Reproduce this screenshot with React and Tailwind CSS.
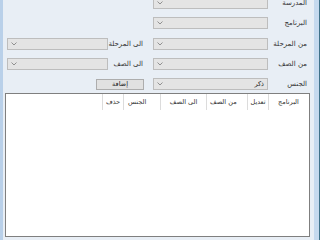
import React from "react";

const font = { fontFamily: '"DejaVu Sans", "Noto Sans", sans-serif' };

function Chevron() {
  return (
    <svg width="6" height="4" viewBox="0 0 6 4" className="shrink-0">
      <path d="M0.5 0.5 L3 3 L5.5 0.5" fill="none" stroke="#7a7a7a" strokeWidth="0.8" />
    </svg>
  );
}

function Combo({ w, value }) {
  return (
    <div
      className={`${w} h-[12px] bg-[#e4e4e4] border border-[#bdbdbd] flex items-center justify-between pl-[3px] pr-[3px] shrink-0`}
      dir="rtl"
    >
      <span className="text-[6.5px] leading-none text-[#222]">{value || ""}</span>
      <Chevron />
    </div>
  );
}

function Label({ w, children }) {
  return (
    <div className={`${w} text-right text-[7px] leading-none text-[#333] shrink-0 pt-[1px]`}>{children}</div>
  );
}

export default function App() {
  const cols = [
    { t: "البرنامج", w: "w-[40px]", cls: "justify-center" },
    { t: "تعديل", w: "w-[21px]", cls: "justify-center" },
    { t: "من الصف", w: "w-[41px]", cls: "justify-end pl-[3px]" },
    { t: "الى الصف", w: "w-[46px]", cls: "justify-center" },
    { t: "الجنس", w: "w-[37px]", cls: "justify-end pl-[4px]" },
    { t: "حذف", w: "w-[21px]", cls: "justify-center" },
  ];
  return (
    <div className="w-[320px] h-[240px] overflow-hidden bg-[#e8eef5] flex" style={font}>
      <div className="w-[3px] h-full bg-[#b9d0e9] shrink-0" />
      <div className="flex-1 flex flex-col" dir="rtl">
        <div className="flex flex-col pr-[7px] mt-[-3px]">
          <div className="flex items-center h-[12px]">
            <Label w="w-[39px]">المدرسة</Label>
            <Combo w="w-[115px]" />
          </div>
          <div className="flex items-center h-[12px] mt-[8px]">
            <Label w="w-[39px]">البرنامج</Label>
            <Combo w="w-[115px]" />
          </div>
          <div className="flex items-center h-[12px] mt-[9px]">
            <Label w="w-[39px]">من المرحلة</Label>
            <Combo w="w-[115px]" />
            <div className="w-[10px] shrink-0" />
            <Label w="w-[35px]">الى المرحلة</Label>
            <Combo w="w-[101px]" />
          </div>
          <div className="flex items-center h-[12px] mt-[8px]">
            <Label w="w-[39px]">من الصف</Label>
            <Combo w="w-[115px]" />
            <div className="w-[10px] shrink-0" />
            <Label w="w-[35px]">الى الصف</Label>
            <Combo w="w-[101px]" />
          </div>
          <div className="flex items-center h-[12px] mt-[8px]">
            <Label w="w-[39px]">الجنس</Label>
            <Combo w="w-[115px]" value="ذكر" />
            <div className="w-[9px] shrink-0" />
            <div className="w-[48px] h-[11px] bg-[#e1e1e1] border border-[#adadad] flex items-center justify-center text-[6.5px] leading-none text-[#222] shrink-0">
              إضافة
            </div>
          </div>
        </div>
        <div className="mt-[3px] mr-[4px] w-[305px] h-[144px] bg-white border border-[#7f7f7f] shrink-0 flex flex-col">
          <div className="flex h-[16px] pr-[1px]">
            {cols.map((c, i) => (
              <div
                key={i}
                className={`${c.w} h-full flex items-center ${c.cls} border-l border-[#dcdcdc] text-[6.5px] leading-none text-[#333] shrink-0`}
              >
                {c.t}
              </div>
            ))}
          </div>
        </div>
      </div>
      <div className="w-[5px] h-full bg-[#c5d9ee] shrink-0" />
      <div className="w-[1px] h-full bg-[#3f7189] shrink-0" />
    </div>
  );
}
